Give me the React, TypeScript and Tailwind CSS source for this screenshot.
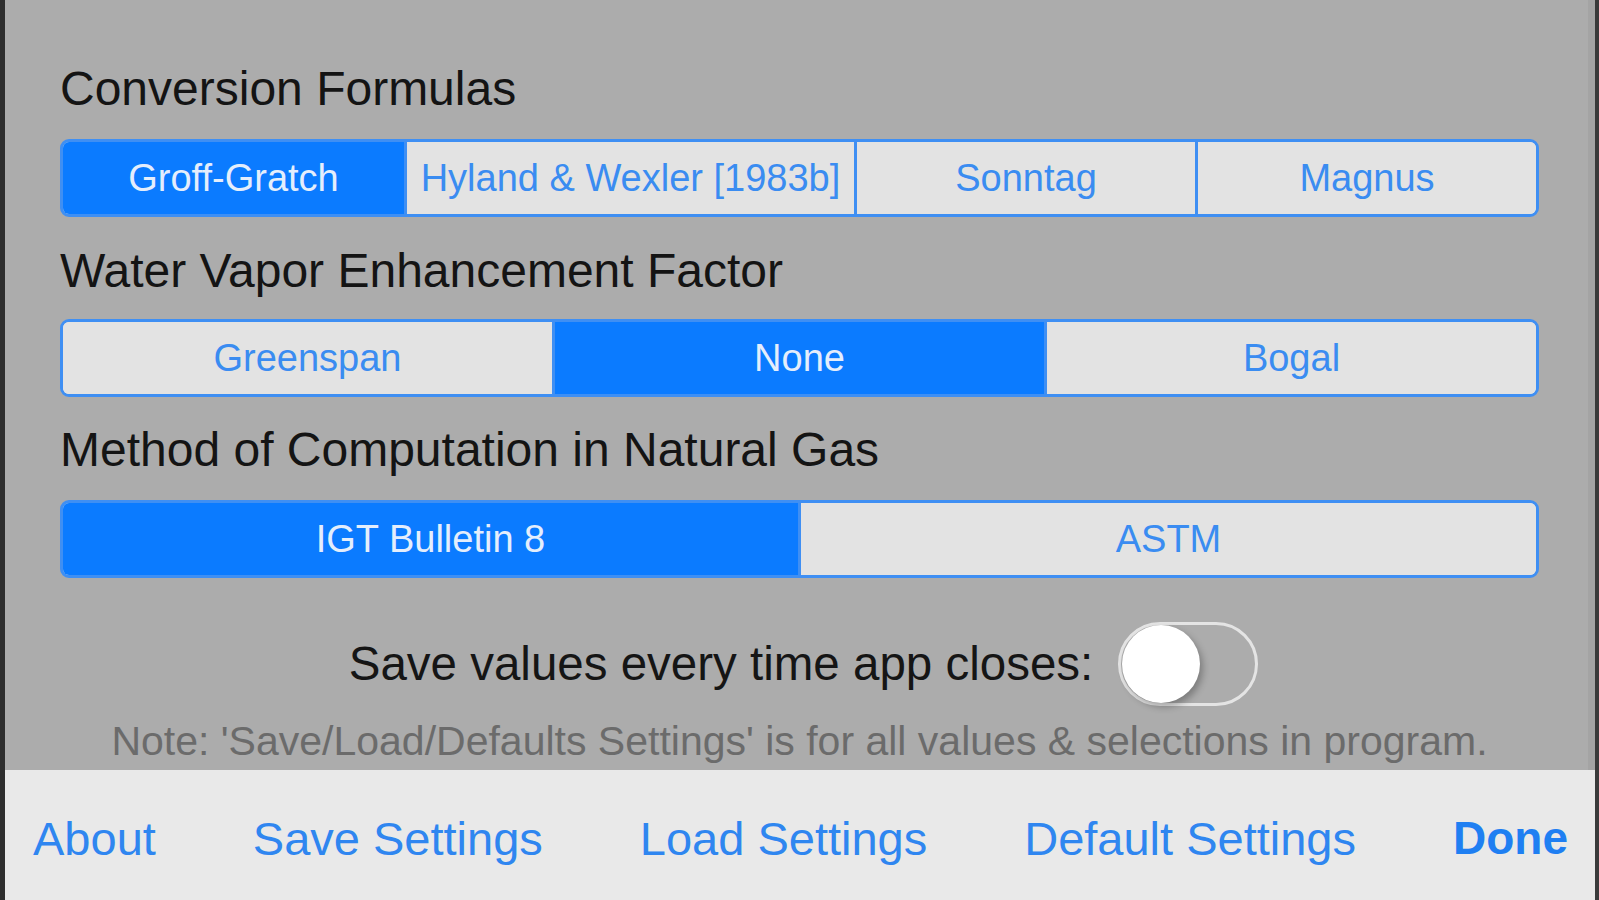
import { useState } from 'react'

type Option = { label: string; width?: string }

const font = { fontFamily: '"Liberation Sans", Arial, sans-serif' }

function Segmented({ options, selected, onSelect }: { options: Option[]; selected: number; onSelect: (i: number) => void }) {
  return (
    <div className="flex h-[78px] w-full rounded-[9px] border-[3px] border-[#3f8ff3] overflow-hidden bg-[#e3e3e3]">
      {options.map((opt, i) => {
        const active = i === selected
        return (
          <button
            key={opt.label}
            onClick={() => onSelect(i)}
            className={`${opt.width ?? 'flex-1'} flex items-center justify-center text-[38px] leading-none ${
              i > 0 ? 'border-l-[3px] border-[#3f8ff3]' : ''
            } ${active ? 'bg-[#0b7bff] text-[#e4eefc]' : 'bg-[#e3e3e3] text-[#3a8cf1]'}`}
          >
            {opt.label}
          </button>
        )
      })}
    </div>
  )
}

export default function App() {
  const [formula, setFormula] = useState(0)
  const [factor, setFactor] = useState(1)
  const [method, setMethod] = useState(0)
  const [saveOnClose, setSaveOnClose] = useState(false)

  return (
    <div className="flex h-[900px] w-full overflow-hidden bg-[#2f2f2f]" style={font}>
      <div className="w-[5px] shrink-0 bg-[#2e2e2e]" />

      <div className="flex flex-1 flex-col">
        {/* settings area */}
        <div className="flex h-[770px]">
          <div className="flex flex-1 flex-col bg-[#acacac] pl-[55px] pr-[49px] pt-[62px]">
            <h2 className="h-[54px] text-[48px] leading-[54px] text-[#141414]">Conversion Formulas</h2>
            <div className="mt-[23px]">
              <Segmented
                options={[
                  { label: 'Groff-Gratch', width: 'w-[341px]' },
                  { label: 'Hyland & Wexler [1983b]', width: 'w-[450px]' },
                  { label: 'Sonntag', width: 'flex-1' },
                  { label: 'Magnus', width: 'flex-1' },
                ]}
                selected={formula}
                onSelect={setFormula}
              />
            </div>

            <h2 className="mt-[27px] h-[54px] text-[48px] leading-[54px] text-[#141414]">Water Vapor Enhancement Factor</h2>
            <div className="mt-[21px]">
              <Segmented
                options={[{ label: 'Greenspan' }, { label: 'None' }, { label: 'Bogal' }]}
                selected={factor}
                onSelect={setFactor}
              />
            </div>

            <h2 className="mt-[26px] h-[54px] text-[48px] leading-[54px] text-[#141414]">Method of Computation in Natural Gas</h2>
            <div className="mt-[23px]">
              <Segmented
                options={[{ label: 'IGT Bulletin 8' }, { label: 'ASTM' }]}
                selected={method}
                onSelect={setMethod}
              />
            </div>

            <div className="mt-[44px] flex h-[84px] items-center justify-center gap-[25px] pl-[8px]">
              <span className="text-[47.5px] leading-none text-[#151515]">Save values every time app closes:</span>
              <button
                onClick={() => setSaveOnClose(!saveOnClose)}
                className={`flex h-[84px] w-[140px] items-center rounded-full border-[3px] p-[1px] ${
                  saveOnClose ? 'justify-end border-[#4cd964] bg-[#4cd964]' : 'justify-start border-[#e4e4e4] bg-transparent'
                }`}
              >
                <span className="h-[78px] w-[78px] rounded-full bg-white shadow-[3px_4px_7px_rgba(0,0,0,0.28)]" />
              </button>
            </div>

            <p className="mt-[12px] text-center text-[41px] leading-[46px] text-[#6b6b6b]">
              Note: 'Save/Load/Defaults Settings' is for all values &amp; selections in program.
            </p>
          </div>
          <div className="w-[7px] shrink-0 bg-[#a4a4a4]" />
        </div>

        {/* bottom toolbar */}
        <div className="flex h-[130px] items-center justify-between bg-[#e9e9e9] pl-[28px] pr-[27px] pt-[6px] text-[47px] leading-none text-[#2f86f0]">
          <button>About</button>
          <button>Save Settings</button>
          <button>Load Settings</button>
          <button>Default Settings</button>
          <button className="text-[46px] font-bold text-[#1f7ff2]">Done</button>
        </div>
      </div>

      <div className="w-[4px] shrink-0 bg-[#3a3a3a]" />
    </div>
  )
}
